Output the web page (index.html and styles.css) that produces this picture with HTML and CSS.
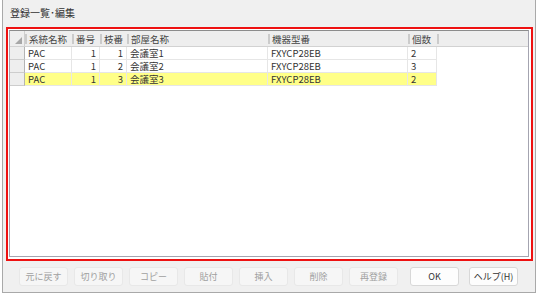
FILE: index.html
```html
<!DOCTYPE html>
<html lang="ja">
<head>
    <meta charset="UTF-8">
    <title>登録一覧･編集</title>
    <link rel="stylesheet" href="styles.css">
</head>
<body>
    <div class="dialog">
        <div class="title">登録一覧･編集</div>

        <div class="frame">
            <div class="grid">
                <table class="list">
                    <thead>
                        <tr>
                            <th class="corner"><span class="tri"></span></th>
                            <th class="c-sys">系統名称</th>
                            <th class="c-no">番号</th>
                            <th class="c-sub">枝番</th>
                            <th class="c-room">部屋名称</th>
                            <th class="c-model">機器型番</th>
                            <th class="c-qty">個数</th>
                            <th class="filler"></th>
                        </tr>
                    </thead>
                    <tbody>
                        <tr>
                            <td class="rowhead"></td>
                            <td>PAC</td>
                            <td class="num">1</td>
                            <td class="num">1</td>
                            <td>会議室1</td>
                            <td>FXYCP28EB</td>
                            <td>2</td>
                            <td class="blank"></td>
                        </tr>
                        <tr>
                            <td class="rowhead"></td>
                            <td>PAC</td>
                            <td class="num">1</td>
                            <td class="num">2</td>
                            <td>会議室2</td>
                            <td>FXYCP28EB</td>
                            <td>3</td>
                            <td class="blank"></td>
                        </tr>
                        <tr class="selected">
                            <td class="rowhead"></td>
                            <td>PAC</td>
                            <td class="num">1</td>
                            <td class="num">3</td>
                            <td>会議室3</td>
                            <td>FXYCP28EB</td>
                            <td>2</td>
                            <td class="blank"></td>
                        </tr>
                    </tbody>
                </table>
            </div>
        </div>

        <div class="buttons">
            <button class="btn" disabled>元に戻す</button>
            <button class="btn" disabled>切り取り</button>
            <button class="btn" disabled>コピー</button>
            <button class="btn" disabled>貼付</button>
            <button class="btn" disabled>挿入</button>
            <button class="btn" disabled>削除</button>
            <button class="btn" disabled>再登録</button>
            <button class="btn ok">OK</button>
            <button class="btn">ヘルプ(H)</button>
        </div>
    </div>
</body>
</html>
```

FILE: styles.css
```css
:root {
    --dialog-bg: #f0f0f0;
    --grid-line: #a0a0a0;
    --cell-line: #e6e6e6;
    --select-bg: #ffff88;
}

body {
    margin: 0;
    background: #ffffff;
    font-family: "Noto Sans CJK JP", "Noto Sans", sans-serif;
    color: #333;
}

.dialog {
    box-sizing: border-box;
    width: 534px;
    height: 293px;
    margin-left: 2px;
    background: var(--dialog-bg);
    border: 1px solid #a9a9a9;
    border-top: none;
    display: flex;
    flex-direction: column;
}

.title {
    height: 27px;
    padding-left: 7px;
    font-size: 10px;
    line-height: 25px;
    color: #333;
}

.frame {
    box-sizing: border-box;
    height: 234px;
    margin: 0 2px 0 3px;
    padding: 1px 2px 2px 1px;
    border: 2px solid #ee1111;
    background: #ffffff;
}

.grid {
    box-sizing: border-box;
    height: 100%;
    border: 1px solid #a4a4b0;
    border-top-color: #8c8c8c;
    background: #ffffff;
}

.list {
    width: 100%;
    table-layout: fixed;
    border-collapse: separate;
    border-spacing: 0;
    font-size: 9.5px;
}

.list th,
.list td {
    box-sizing: border-box;
    padding: 0 3px;
    white-space: nowrap;
    overflow: hidden;
    text-align: left;
}

.list th {
    height: 16px;
    font-weight: normal;
    color: #444;
    background: linear-gradient(#cbcbcb, #cbcbcb) no-repeat 0 3px / 2px 10px, #eeeeee;
    border-bottom: 1px solid #d2d2d2;
    padding-left: 4px;
}

.list td {
    height: 13px;
    line-height: 12px;
    color: #333;
    border-right: 1px solid var(--cell-line);
    border-bottom: 1px solid var(--cell-line);
}

.list .corner {
    width: 15px;
    background: #eeeeee;
    border-right: 1px solid #cfcfcf;
    position: relative;
}

.tri {
    position: absolute;
    right: 2px;
    bottom: 2px;
    width: 0;
    height: 0;
    border-left: 7px solid transparent;
    border-bottom: 7px solid #a7a7a7;
}

.c-sys { width: 47px; }
.c-no { width: 28px; }
.c-sub { width: 27px; }
.c-room { width: 141px; }
.c-model { width: 140px; }
.c-qty { width: 29px; }

.list .rowhead {
    background: #eeeeee;
    border-right: 1px solid #b4b4b4;
    border-bottom: 1px solid #cdcdcd;
}

.list .num {
    text-align: right;
}

.list .blank {
    border: none;
    background: #ffffff;
}

.selected td {
    background: var(--select-bg);
}

.selected .rowhead {
    background: #eeeeee;
}

.buttons {
    display: flex;
    gap: 6px;
    margin-top: 6px;
    padding-left: 16px;
}

.btn {
    box-sizing: border-box;
    width: 49px;
    height: 19px;
    padding: 0;
    font-family: "Noto Sans CJK JP", "Noto Sans", sans-serif;
    font-size: 9px;
    color: #333;
    background: #fdfdfd;
    border: 1px solid #d8d8d8;
    border-radius: 3px;
}

.btn:disabled {
    color: #a0a0a0;
    background: #f6f6f6;
    border-color: #e8e8e8;
}

.btn.ok {
    margin-left: 6px;
    margin-right: 4px;
}
```
